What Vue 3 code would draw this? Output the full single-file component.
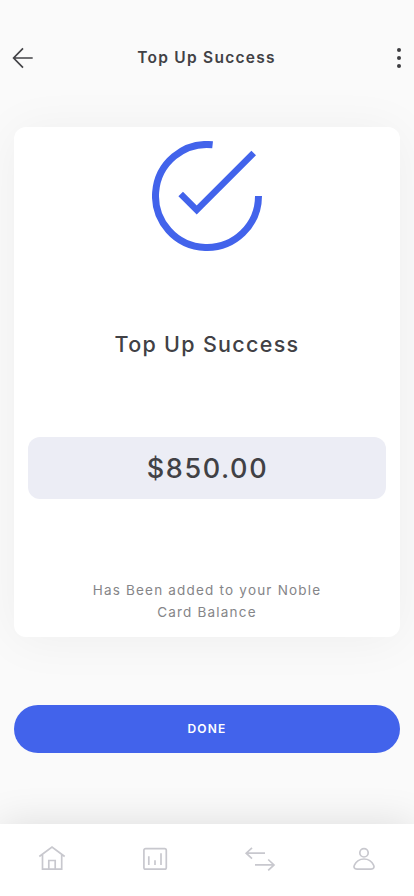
<script setup>
const title = 'Top Up Success'
const amount = '$850.00'
</script>

<template>
  <div class="screen">
    <header class="header">
      <svg class="back" width="22" height="22" viewBox="0 0 22 22" aria-label="Back">
        <path d="M20.700 11H2M11 1.300L1.600 11L11 20.700" />
      </svg>
      <h1 class="title">{{ title }}</h1>
      <svg class="more" width="4" height="20" viewBox="0 0 4 20" aria-label="More">
        <circle cx="2" cy="2" r="2" />
        <circle cx="2" cy="10" r="2" />
        <circle cx="2" cy="18" r="2" />
      </svg>
    </header>

    <main class="card">
      <svg class="success" width="110" height="110" viewBox="0 0 110 110" aria-hidden="true">
        <path class="ring" d="M106.500 55A51.500 51.500 0 1 1 60.600 3.800" />
        <path class="check" d="M28.700 53L44.700 69L101.700 12" />
      </svg>
      <h2 class="heading">{{ title }}</h2>
      <div class="amount">{{ amount }}</div>
      <p class="note">Has Been added to your Noble<br />Card Balance</p>
    </main>

    <button class="done" type="button">DONE</button>

    <nav class="tabs">
      <a class="tab home">
        <svg width="28" height="28" viewBox="0 0 28 28">
          <path d="M1.300 11.500L14 2L26.700 11.500M4.500 9.400V24.200H23.700V9.400M10.800 24.200V15.500H17.200V24.200" />
        </svg>
      </a>
      <a class="tab stats">
        <svg width="28" height="28" viewBox="0 0 28 28">
          <rect x="2.900" y="2.600" width="22.400" height="20.600" rx="1.700" />
          <path d="M7.800 10.200V19M14 14.200V19M20 7.200V19" />
        </svg>
      </a>
      <a class="tab transfer">
        <svg width="32" height="28" viewBox="0 0 32 28">
          <path d="M21 7.200H2.400M8 1.800L2.200 7.200L8 12.600M11 18.900H30M24.200 13.500L30 18.900L24.200 24.300" />
        </svg>
      </a>
      <a class="tab profile">
        <svg width="28" height="28" viewBox="0 0 28 28">
          <circle cx="14" cy="6.800" r="4.200" />
          <path d="M7 23.200C4.200 23.200 3.400 21.200 4.400 19.200C6.100 15.500 9.500 13 14 13S21.900 15.500 23.600 19.200C24.600 21.200 23.800 23.200 21 23.200Z" />
        </svg>
      </a>
    </nav>
  </div>
</template>

<style>
body {
  background: #fafafa;
}
</style>

<style scoped>
.screen {
  display: flex;
  flex-direction: column;
  box-sizing: border-box;
  width: 100%;
  height: 896px;
  padding-top: 43px;
  overflow: hidden;
  background: #fafafa;
  color: #414145;
  font-family: Inter, "Liberation Sans", sans-serif;
}

.header {
  display: grid;
  grid-template-columns: 22px 1fr 22px;
  align-items: center;
  height: 30px;
  padding: 0 13px 0 12px;
}

.back {
  fill: none;
  stroke: #434347;
  stroke-width: 1.7;
}

.more {
  justify-self: end;
  fill: #3d3d40;
}

.title {
  margin: 0;
  font-size: 15.5px;
  font-weight: 600;
  line-height: 30px;
  letter-spacing: 1.25px;
  text-align: center;
}

.card {
  display: flex;
  flex-direction: column;
  align-items: center;
  box-sizing: border-box;
  height: 510px;
  margin: 54px 14px 0;
  padding: 14px;
  border-radius: 12px;
  background: #fff;
  box-shadow: 0 3px 50px rgba(0, 0, 0, 0.05);
}

.success {
  flex: none;
  fill: none;
  stroke: #4263eb;
}

.ring {
  stroke-width: 7;
}

.check {
  stroke-width: 6.5;
}

.heading {
  margin: 78px 0 0;
  font-size: 21.5px;
  font-weight: 450;
  line-height: 30px;
  letter-spacing: 1.3px;
}

.amount {
  align-self: stretch;
  box-sizing: border-box;
  height: 62px;
  margin-top: 78px;
  padding-left: 1px;
  border-radius: 12px;
  background: #ecedf5;
  font-size: 27px;
  font-weight: 500;
  line-height: 63px;
  letter-spacing: 1.6px;
  text-align: center;
}

.note {
  margin: 80px 0 0;
  color: #858588;
  font-size: 13.5px;
  line-height: 22px;
  letter-spacing: 1.2px;
  text-align: center;
}

.done {
  flex: none;
  height: 48px;
  margin: 68px 14px 0;
  padding: 0 0 2px;
  border: 0;
  border-radius: 24px;
  background: #4263eb;
  color: #fff;
  font-family: inherit;
  font-size: 12px;
  font-weight: 600;
  letter-spacing: 1.2px;
}

.tabs {
  display: grid;
  grid-template-columns: repeat(4, 1fr);
  align-items: start;
  box-sizing: border-box;
  height: 72px;
  margin-top: auto;
  padding-top: 21px;
  background: #fff;
  box-shadow: 0 0 40px rgba(0, 0, 0, 0.12);
}

.tab {
  display: flex;
  justify-content: center;
}

.tab svg {
  fill: none;
  stroke: #c8c8ce;
  stroke-width: 1.7;
}

.stats,
.transfer,
.profile {
  padding-top: 1px;
}

.transfer {
  padding-left: 2px;
}

.profile {
  padding-left: 3px;
}
</style>
